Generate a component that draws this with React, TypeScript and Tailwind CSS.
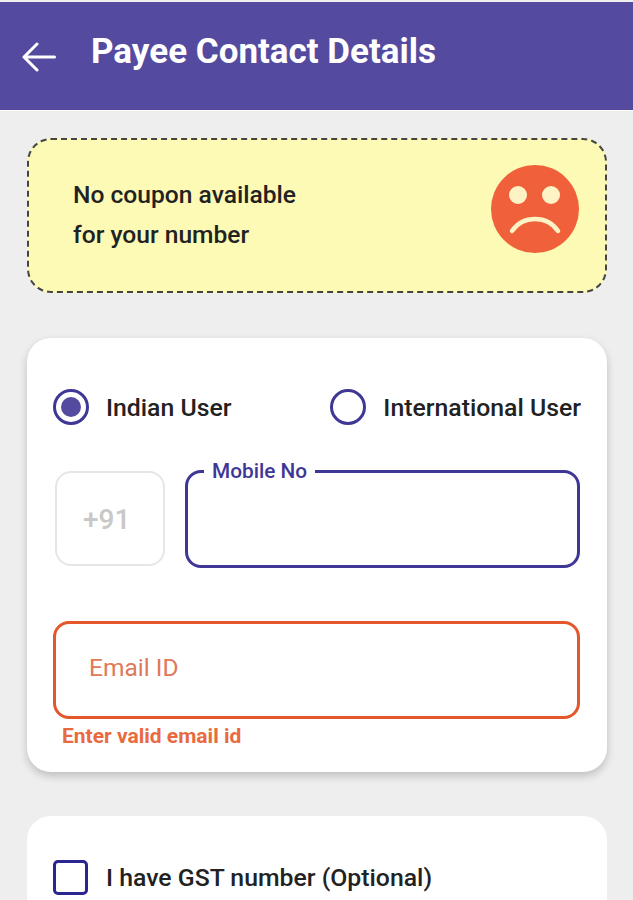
function Radio({ checked, label }: { checked?: boolean; label: string }) {
  return (
    <div className="flex items-center gap-[17px]">
      <div className="flex h-[36px] w-[36px] items-center justify-center rounded-full border-[3px] border-[#3f3796] bg-white">
        {checked && <div className="h-[20px] w-[20px] rounded-full bg-[#544ba0]" />}
      </div>
      <span className="pt-[2px] text-[24.8px] font-medium leading-[30px] text-[#222222]">{label}</span>
    </div>
  );
}

export default function App() {
  return (
    <div className="h-[900px] w-[633px] overflow-hidden bg-[#eeeeee] font-['Roboto',sans-serif]">
      {/* App bar */}
      <header className="mt-[2px] flex h-[108px] items-start bg-[#544ba0] pl-[22px] pt-[28px] text-white shadow-[0_1px_0_#ffffff]">
        <svg width="34" height="30" viewBox="0 0 34 30" fill="none" className="mt-[12px] shrink-0" aria-hidden="true">
          <path d="M32.5 15H2M15 2 2 15l13 13" stroke="#ffffff" strokeWidth="3" strokeLinecap="round" strokeLinejoin="round" />
        </svg>
        <h1 className="ml-[35px] text-[35px] font-bold leading-[44px]">Payee Contact Details</h1>
      </header>

      <main className="pl-[27px] pr-[26px]">
        {/* Coupon banner */}
        <section className="mt-[28px] flex h-[155px] items-center justify-between rounded-[24px] border-2 border-dashed border-[#444444] bg-[#fdfab5] pl-[44px] pr-[26px]">
          <p className="mb-[2px] text-[24.6px] font-medium leading-[40px] text-[#222222]">
            No coupon available
            <br />
            for your number
          </p>
          <svg width="88" height="88" viewBox="0 0 88 88" className="mb-[14px]" aria-hidden="true">
            <circle cx="44" cy="44" r="44" fill="#f0603a" />
            <circle cx="27" cy="30" r="9" fill="#fdf3c4" />
            <circle cx="60" cy="30" r="9" fill="#fdf3c4" />
            <path d="M21 66 C32 50 56 50 67 66" fill="none" stroke="#fdf3c4" strokeWidth="4.5" strokeLinecap="round" />
          </svg>
        </section>

        {/* Contact form */}
        <section className="mt-[45px] h-[434px] rounded-[24px] bg-white pl-[26px] pr-[27px] pt-[51px] shadow-[0_4px_8px_rgba(0,0,0,0.2)]">
          <div className="mr-[-1px] flex items-center justify-between">
            <Radio checked label="Indian User" />
            <Radio label="International User" />
          </div>

          <div className="mt-[46px] flex gap-[20px]">
            <div className="ml-[2px] flex h-[95px] w-[110px] shrink-0 items-center rounded-[16px] border-2 border-[#e6e6e6] pl-[26px] pt-[2px] text-[28px] font-medium text-[#c8c8c8]">
              +91
            </div>
            <div className="relative mt-[-1px] h-[98px] flex-1 rounded-[16px] border-[3px] border-[#3f3796]">
              <span className="absolute left-[16px] top-[-15px] bg-white px-[8px] text-[20.8px] font-medium leading-[26px] text-[#3f3796]">
                Mobile No
              </span>
            </div>
          </div>

          <div className="mt-[53px] flex h-[98px] items-center rounded-[16px] border-[3px] border-[#e4572a] pb-[4px] pl-[33px] text-[24.5px] text-[#e0785a]">
            Email ID
          </div>
          <p className="ml-[9px] mt-[4px] text-[21px] font-bold leading-[26px] text-[#e96a3f]">
            Enter valid email id
          </p>
        </section>

        {/* GST option */}
        <section className="mt-[44px] h-[200px] rounded-[24px] bg-white pl-[26px] pr-[27px] pt-[44px]">
          <div className="flex items-center gap-[18px]">
            <div className="h-[35px] w-[35px] rounded-[5px] border-[3px] border-[#2a2590]" />
            <span className="text-[24.8px] font-medium leading-[32px] text-[#222222]">
              I have GST number (Optional)
            </span>
          </div>
        </section>
      </main>
    </div>
  );
}
